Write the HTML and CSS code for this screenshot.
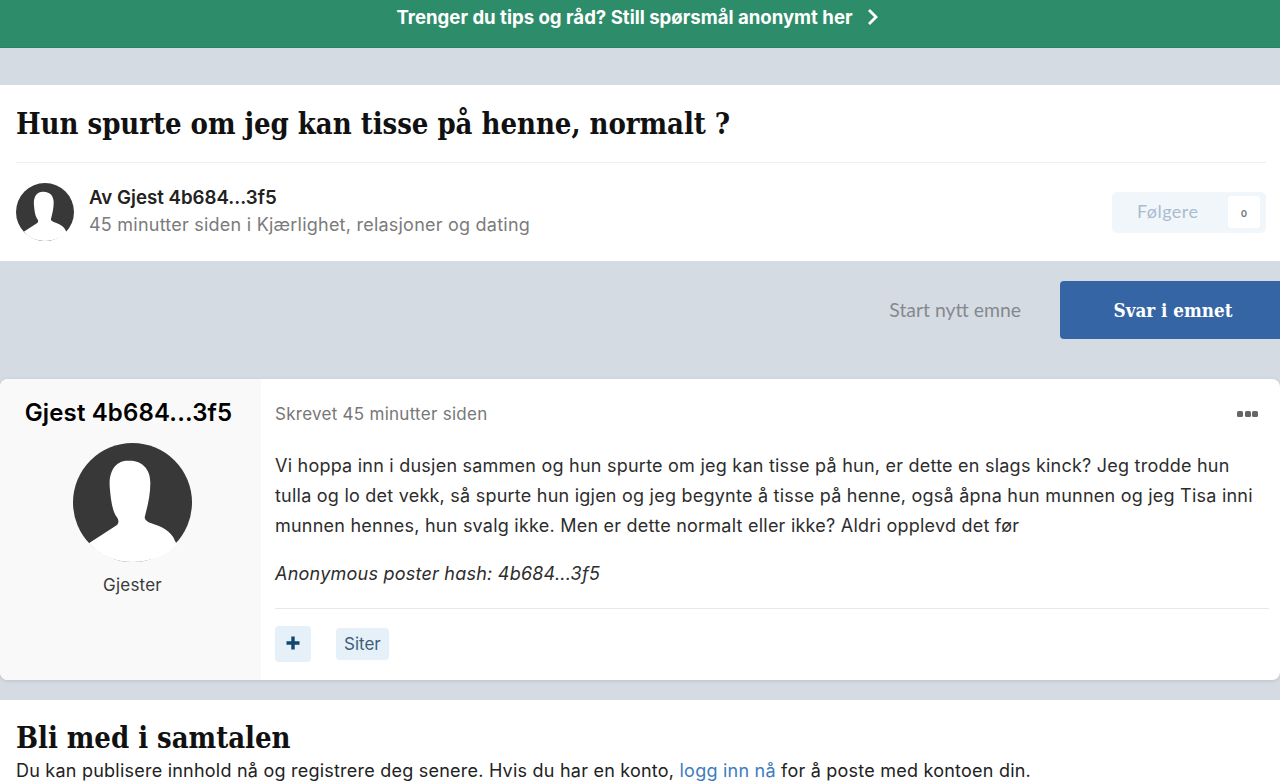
FILE: index.html
```html
<!DOCTYPE html>
<html lang="no">
<head>
<meta charset="utf-8">
<title>Hun spurte om jeg kan tisse på henne, normalt ?</title>
<link rel="stylesheet" href="styles.css">
</head>
<body>
<a class="banner"><span>Trenger du tips og råd? Still spørsmål anonymt her</span>
<svg class="chev" width="12" height="16" viewBox="0 0 12 16"><path d="M2 1 9 8l-7 7" fill="none" stroke="#fff" stroke-width="2.8"/></svg></a>
<header class="head">
  <h1 class="title">Hun spurte om jeg kan tisse på henne, normalt ?</h1>
  <div class="meta">
    <svg class="ava-s" viewBox="0 0 120 120"><use href="#ph"/></svg>
    <div class="meta-text">
      <div class="by">Av Gjest 4b684...3f5</div>
      <div class="when">45 minutter siden i Kjærlighet, relasjoner og dating</div>
    </div>
    <div class="follow"><span class="follow-l">Følgere</span><span class="follow-n">0</span></div>
  </div>
</header>
<div class="actions">
  <span class="start">Start nytt emne</span>
  <span class="reply">Svar i emnet</span>
</div>
<article class="post">
  <aside class="side">
    <div class="name">Gjest 4b684...3f5</div>
    <svg class="ava-l" viewBox="0 0 120 120">
      <defs>
        <g id="ph">
          <circle cx="60" cy="60" r="60" fill="#383838"/>
          <path d="M16 101 44 83C47 81 46 76 43 73 39 66 38 55 37 44 36 26 45 18 55 18 67 17 78 24 78 40 78 53 75 64 73 72 71 77 74 79 79 81 88 84 99 88 103 99L105 102C95 113 78 120 60 120 42 120 27 113 16 101Z" fill="#fff"/>
        </g>
      </defs>
      <use href="#ph"/>
    </svg>
    <div class="group">Gjester</div>
  </aside>
  <div class="main">
    <div class="post-top"><span class="posted">Skrevet 45 minutter siden</span><span class="dots"><i></i><i></i><i></i></span></div>
    <p class="body">Vi hoppa inn i dusjen sammen og hun spurte om jeg kan tisse på hun, er dette en slags kinck? Jeg trodde hun tulla og lo det vekk, så spurte hun igjen og jeg begynte å tisse på henne, også åpna hun munnen og jeg Tisa inni munnen hennes, hun svalg ikke. Men er dette normalt eller ikke? Aldri opplevd det før</p>
    <p class="hash">Anonymous poster hash: 4b684...3f5</p>
    <div class="post-foot">
      <span class="plus"><svg width="14" height="14" viewBox="0 0 14 14"><path d="M7 .5v13M.5 7h13" stroke="#12466e" stroke-width="3.4"/></svg></span>
      <span class="quote">Siter</span>
    </div>
  </div>
</article>
<section class="join">
  <h2 class="join-t">Bli med i samtalen</h2>
  <p class="join-p">Du kan publisere innhold nå og registrere deg senere. Hvis du har en konto, <a class="link">logg inn nå</a> for å poste med kontoen din.</p>
</section>
</body>
</html>
```
FILE: styles.css
```css
html,body{margin:0;padding:0;height:781px;overflow:hidden}
body{background:#d5dbe3;font-family:Inter,"Noto Sans",sans-serif;color:#2b2b2b}
.banner{display:flex;justify-content:center;align-items:center;gap:14px;height:33px;padding:0 5px 14px 0;background:#2d8c69;color:#fff;font-weight:700;font-size:18.6px;border-bottom:1px solid #2a8263}
.head{margin-top:37px;background:#fff;padding:0 14px 0 16px;height:176px;box-sizing:border-box}
.title{margin:0;height:78px;box-sizing:border-box;padding-top:17px;font-family:"DejaVu Serif Condensed","DejaVu Serif",serif;font-stretch:condensed;font-weight:700;font-size:29px;letter-spacing:-.04px;line-height:44px;color:#111;border-bottom:1px solid #eee}
.meta{display:flex;align-items:center;height:98px}
.ava-s{width:58px;height:58px;margin-right:15px}
.meta-text{flex:1}
.by{font-weight:600;font-size:18.7px;line-height:26px;color:#222}
.when{font-size:18px;letter-spacing:.23px;line-height:28px;color:#7b7b7b}
.follow{display:flex;align-items:center;justify-content:space-between;width:154px;height:41px;box-sizing:border-box;padding:0 6px 0 25px;background:#f1f6fb;border-radius:5px}
.follow-l{font-family:Lato,sans-serif;font-size:18px;letter-spacing:.45px;padding-bottom:2px;color:#a9bccf}
.follow-n{display:flex;align-items:center;justify-content:center;width:32px;height:32px;background:#fff;border-radius:4px;font-family:Lato,sans-serif;font-variant-numeric:oldstyle-nums;font-size:11px;font-weight:700;color:#777}
.actions{display:flex;justify-content:flex-end;align-items:center;height:118px;box-sizing:border-box;padding-bottom:20px}
.start{font-family:Lato,sans-serif;font-size:19.4px;padding-bottom:2px;color:#85898f;margin-right:39px}
.reply{display:flex;align-items:center;justify-content:center;width:220px;height:58px;box-sizing:border-box;padding-left:6px;background:#3565a5;color:#fff;border-radius:4px 0 0 4px;font-family:"DejaVu Serif Condensed","DejaVu Serif",serif;font-stretch:condensed;font-weight:700;font-size:18.7px}
.post{display:flex;height:301px;background:#fff;border-radius:8px;box-shadow:0 1px 4px rgba(0,0,0,.12)}
.side{width:261px;flex:none;background:#f9f9f9;border-radius:8px 0 0 8px;display:flex;flex-direction:column;align-items:center;box-sizing:border-box;padding:16px 4px 0 0}
.name{font-weight:600;font-size:24px;letter-spacing:.15px;line-height:36px;color:#000}
.ava-l{width:119px;height:119px;margin-top:12px;margin-left:8px}
.group{font-size:17px;letter-spacing:.2px;line-height:24px;margin-top:11px;margin-left:8px;color:#3a3a3a}
.main{flex:1;min-width:0;padding:0 11px 0 14px}
.post-top{display:flex;justify-content:space-between;align-items:center;height:72px;padding:0 11px 2px 0;box-sizing:border-box}
.posted{font-size:17px;letter-spacing:.27px;color:#777}
.dots{display:flex;gap:1.5px}
.dots i{width:6px;height:6px;border-radius:1.5px;background:#666}
.body{margin:0;font-size:18px;letter-spacing:.23px;line-height:30px;color:#2d2d2d}
.hash{margin:18px 0 0;font-size:18px;letter-spacing:.23px;line-height:30px;font-style:italic;color:#2d2d2d}
.post-foot{display:flex;align-items:center;gap:25px;margin-top:19px;padding-top:17px;border-top:1px solid #e8e8e8}
.plus{display:flex;align-items:center;justify-content:center;width:36px;height:36px;box-sizing:border-box;padding-bottom:2px;background:#e6f0f9;border-radius:4px}
.quote{display:flex;align-items:center;height:32px;padding:0 8px;background:#e6f0f9;border-radius:4px;font-size:17px;color:#3f5f7c}
.join{margin-top:20px;background:#fff;padding:19px 16px 0;height:81px}
.join-t{margin:0;font-family:"DejaVu Serif Condensed","DejaVu Serif",serif;font-stretch:condensed;font-weight:700;font-size:29px;letter-spacing:-.04px;line-height:38px;color:#111}
.join-p{margin:0;font-size:18px;letter-spacing:.225px;line-height:27px;color:#222}
.link{color:#3d7cc0}
```
